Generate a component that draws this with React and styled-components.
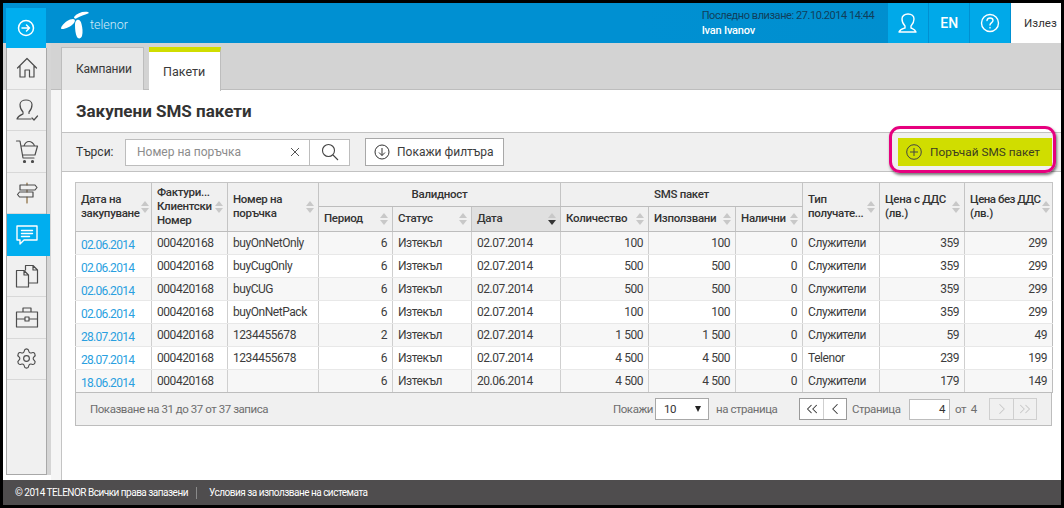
import React from 'react'
import styled, { createGlobalStyle } from 'styled-components'
import { ChevronLeft, ChevronRight, ChevronsLeft, ChevronsRight, Settings } from 'lucide-react'

const GlobalStyle = createGlobalStyle`
  html, body { margin: 0; padding: 0; background: #000; }
  body { font-family: Roboto, "Noto Sans", "Liberation Sans", sans-serif; font-size: 12px; color: #3c3c3c; }
  * { box-sizing: border-box; }
`

const rows = [
  ['02.06.2014', 'buyOnNetOnly', '6', '02.07.2014', '100', '100', 'Служители', '359', '299'],
  ['02.06.2014', 'buyCugOnly', '6', '02.07.2014', '500', '500', 'Служители', '359', '299'],
  ['02.06.2014', 'buyCUG', '6', '02.07.2014', '500', '500', 'Служители', '359', '299'],
  ['02.06.2014', 'buyOnNetPack', '6', '02.07.2014', '100', '100', 'Служители', '359', '299'],
  ['28.07.2014', '1234455678', '2', '02.07.2014', '1 500', '1 500', 'Служители', '59', '49'],
  ['28.07.2014', '1234455678', '6', '02.07.2014', '4 500', '4 500', 'Telenor', '239', '199'],
  ['18.06.2014', '', '6', '20.06.2014', '4 500', '4 500', 'Служители', '179', '149'],
]

const colWidths = [76, 76, 91, 74, 79, 89, 88, 87, 67, 77, 85, 88]

const Icon = ({ children }) => (
  <svg width="24" height="24" viewBox="0 0 24 24" fill="none" stroke="#4d4d4d" strokeWidth="1.2" strokeLinejoin="round" strokeLinecap="round">
    {children}
  </svg>
)

const navItems = [
  { id: 'home', icon: <Icon><path d="M2.5 12 12 2.5 21.5 12M5 10v11h5v-7h4.500v7H19V10" /></Icon> },
  { id: 'user', icon: <Icon><path d="M8 14c-2-2-3-5-3-7.500C5 3.500 8 2 11 2s6 1.500 6 4.500c0 2.500-1 5.500-3 7.500v1.500M8 14v2c-2 1-5 2-6 5h14M17 20l2 2 3.500-4" /></Icon> },
  { id: 'cart', icon: <Icon><path d="M1.500 2H5l3 17h11M6 7h16.500L20 16H7.500M9 7c1-3 3-4.500 5-4.500s5 2 5.500 4.500" /><circle cx="9.500" cy="22.500" r="1" fill="#4d4d4d" /><circle cx="17.500" cy="22.500" r="1" fill="#4d4d4d" /></Icon> },
  { id: 'sign', icon: <Icon><path d="M12 2v2M12 9v2M12 16v6" stroke="#8a6a3a" /><path d="M5 4h15l2 2.500L20 9H5zM18 11H4.500L2.500 13.500l2 2.500H18z" /></Icon> },
  { id: 'sms', active: true, icon: <Icon><path d="M2 3h20v14H9l-4 4v-4H2zM6.500 7.500h11M6.500 10.500h11M6.500 13.500h8" stroke="#fff" strokeWidth="1.400" /></Icon> },
  { id: 'docs', icon: <Icon><path d="M1.500 6.500H9l4.500 4.500v12h-12zM9 6.500V11h4.500M10.500 6V1.500H18l4.500 4.500v13h-9M18 1.500V6h4.500" /></Icon> },
  { id: 'case', icon: <Icon><path d="M1.500 7h21v15h-21zM8 7V3h8v4M1.500 14h8M14.500 14h8M10 12h4v4h-4z" /></Icon> },
  { id: 'gear', icon: <Settings size={23} strokeWidth={1.2} color="#4d4d4d" /> },
]

function SortHead({ children, active }) {
  return (
    <HeadInner>
      <span>{children}</span>
      <Sort $active={active}><i /><i /></Sort>
    </HeadInner>
  )
}

function App() {
  return (
    <Frame lang="bg">
      <GlobalStyle />
      <TopBar>
        <Logo>
          <svg width="28" height="28" viewBox="0 0 28 28" fill="#fff">
            <path d="M27 1C22 0 16 2 13 6c0 2 2 2 3 1 3-2 8-3 11-4.500 1-.5 1-1 0-1.500z" />
            <path d="M1 18c-1.500.5-1-2 0-3 3-4 7-7 11-7 2 0 2.500 2 1 4-3 3.500-8 6-12 6z" />
            <path d="M16 9c2-1 4 1 4.500 4 1 4 1.500 8 .5 12-1 3-4 3-5 1-1.500-3-2-8-2-12 0-2.500.5-4 2-5z" />
          </svg>
          <LogoText>telenor</LogoText>
        </Logo>
        <LastLogin>
          <span>Последно влизане: 27.10.2014 14:44</span>
          <strong>Ivan Ivanov</strong>
        </LastLogin>
        <TopButton aria-label="Профил">
          <svg width="22" height="22" viewBox="0 0 22 22" fill="none" stroke="#fff" strokeWidth="1.400" strokeLinejoin="round">
            <path d="M8 14c-2-2-3-4.500-3-7 0-3 2.500-5 6-5s6 2 6 5c0 2.500-1 5-3 7v2c2 1 4 1.500 5 4H2c1-2.500 3-3 6-4z" />
          </svg>
        </TopButton>
        <TopButton>EN</TopButton>
        <TopButton aria-label="Помощ">
          <svg width="22" height="22" viewBox="0 0 22 22" fill="none" stroke="#fff" strokeWidth="1.400" strokeLinecap="round">
            <circle cx="11" cy="11" r="8.500" />
            <path d="M8 8.500c.2-1.700 1.400-2.500 3-2.500s3 1 3 2.500c0 2-3 2.200-3 4.500" />
            <path d="M11 15.500v.4" />
          </svg>
        </TopButton>
        <Logout>Излез</Logout>
      </TopBar>
      <Main>
        <RailColumn>
          <Toggle aria-label="Меню">
            <svg width="20" height="20" viewBox="0 0 20 20" fill="none" stroke="#fff" strokeWidth="1.500" strokeLinecap="round" strokeLinejoin="round">
              <circle cx="10" cy="10" r="7.500" />
              <path d="M6 10h7.500M10.500 7l3 3-3 3" />
            </svg>
          </Toggle>
          <Rail>
            {navItems.map((item) => (
              <NavItem key={item.id} $active={item.active}>{item.icon}</NavItem>
            ))}
          </Rail>
        </RailColumn>
        <Pane>
          <TabBand>
            <Tab>Кампании</Tab>
            <ActiveTab>Пакети</ActiveTab>
          </TabBand>
          <Panel>
            <Title>Закупени SMS пакети</Title>
            <Toolbar>
              <SearchLabel>Търси:</SearchLabel>
              <SearchBox>
                <SearchText>Номер на поръчка</SearchText>
                <svg width="10" height="10" viewBox="0 0 10 10" stroke="#555" strokeWidth="1"><path d="M1 1l8 8M9 1l-8 8" /></svg>
              </SearchBox>
              <SearchButton aria-label="Търси">
                <svg width="18" height="18" viewBox="0 0 18 18" fill="none" stroke="#444" strokeWidth="1.100"><circle cx="7.500" cy="7.500" r="6" /><path d="M12 12l5 5" /></svg>
              </SearchButton>
              <FilterButton>
                <svg width="16" height="16" viewBox="0 0 16 16" fill="none" stroke="#333" strokeWidth="1"><circle cx="8" cy="8" r="7" /><path d="M8 4v7.500M5 8.500l3 3 3-3" /></svg>
                Покажи филтъра
              </FilterButton>
              <OrderWrap>
                <OrderButton>
                  <svg width="16" height="16" viewBox="0 0 16 16" fill="none" stroke="#444" strokeWidth="1"><circle cx="8" cy="8" r="7.300" /><path d="M8 4v8M4 8h8" /></svg>
                  Поръчай SMS пакет
                </OrderButton>
                <Highlight />
              </OrderWrap>
            </Toolbar>
            <Grid>
              <Table>
                <colgroup>
                  {colWidths.map((w, i) => <col key={i} width={w} />)}
                </colgroup>
                <thead>
                  <tr>
                    <Th rowSpan={2}><SortHead>Дата на закупуване</SortHead></Th>
                    <Th rowSpan={2}><SortHead>Фактури... Клиентски Номер</SortHead></Th>
                    <Th rowSpan={2}><SortHead>Номер на поръчка</SortHead></Th>
                    <GroupTh colSpan={3}>Валидност</GroupTh>
                    <GroupTh colSpan={3}>SMS пакет</GroupTh>
                    <Th rowSpan={2}><SortHead>Тип получате...</SortHead></Th>
                    <Th rowSpan={2}><SortHead>Цена с ДДС (лв.)</SortHead></Th>
                    <Th rowSpan={2}><SortHead><TightLine>Цена без ДДС</TightLine>(лв.)</SortHead></Th>
                  </tr>
                  <tr>
                    <SubTh><SortHead>Период</SortHead></SubTh>
                    <SubTh><SortHead>Статус</SortHead></SubTh>
                    <SubTh $active><SortHead active>Дата</SortHead></SubTh>
                    <SubTh><SortHead>Количество</SortHead></SubTh>
                    <SubTh><SortHead>Използвани</SortHead></SubTh>
                    <SubTh><SortHead>Налични</SortHead></SubTh>
                  </tr>
                </thead>
                <tbody>
                  {rows.map((r, i) => (
                    <Row key={i}>
                      <Td><DateLink>{r[0]}</DateLink></Td>
                      <Td>000420168</Td>
                      <Td>{r[1]}</Td>
                      <Td $right>{r[2]}</Td>
                      <Td>Изтекъл</Td>
                      <Td>{r[3]}</Td>
                      <Td $right>{r[4]}</Td>
                      <Td $right>{r[5]}</Td>
                      <Td $right>0</Td>
                      <Td>{r[6]}</Td>
                      <Td $right>{r[7]}</Td>
                      <Td $right>{r[8]}</Td>
                    </Row>
                  ))}
                </tbody>
              </Table>
              <Pager>
                <PagerInfo>Показване на 31 до 37 от 37 записа</PagerInfo>
                <PagerLabel $width={39}>Покажи</PagerLabel>
                <PageSize>10<Caret /></PageSize>
                <PagerLabel $width={66} $left={7} $right={17}>на страница</PagerLabel>
                <PageGroup>
                  <PageButton aria-label="Първа"><ChevronsLeft size={18} strokeWidth={1.4} /></PageButton>
                  <PageButton aria-label="Предишна"><ChevronLeft size={18} strokeWidth={1.4} /></PageButton>
                </PageGroup>
                <PagerLabel $width={52} $left={5}>Страница</PagerLabel>
                <PageInput>4</PageInput>
                <PagerLabel $width={26} $left={5} $right={8}>от&nbsp; 4</PagerLabel>
                <PageGroup $disabled>
                  <PageButton $disabled aria-label="Следваща"><ChevronRight size={18} strokeWidth={1.4} /></PageButton>
                  <PageButton $disabled aria-label="Последна"><ChevronsRight size={18} strokeWidth={1.4} /></PageButton>
                </PageGroup>
              </Pager>
            </Grid>
          </Panel>
        </Pane>
      </Main>
      <Footer>
        <FooterCopy>© 2014 TELENOR Всички права запазени</FooterCopy>
        <FooterSep />
        <span>Условия за използване на системата</span>
      </Footer>
    </Frame>
  )
}

const Frame = styled.div`
  width: 1058px;
  height: 502px;
  margin: 3px 0 0 3px;
  display: flex;
  flex-direction: column;
  background: #fff;
  overflow: hidden;
`

const TopBar = styled.header`
  height: 40px;
  flex: none;
  display: flex;
  align-items: stretch;
  background: linear-gradient(to right, #0090d2, #0090d2 60%, #008ecd);
`

const Logo = styled.div`
  width: 699px;
  padding: 8px 0 0 58px;
  display: flex;
  align-items: flex-start;
`

const LogoText = styled.span`
  margin: 6px 0 0 1px;
  font-size: 12.500px;
  font-weight: 300;
  color: #d5edf9;
`

const LastLogin = styled.div`
  width: 188px;
  padding: 5px 0 0 1px;
  display: flex;
  flex-direction: column;
  font-size: 11px;
  letter-spacing: -0.44px;
  line-height: 15px;
  white-space: nowrap;
  color: #103f5c;
  strong { color: #fff; font-weight: 500; letter-spacing: -0.2px; }
`

const TopButton = styled.div`
  width: 41px;
  display: flex;
  align-items: center;
  justify-content: center;
  background: #00a9e9;
  border-right: 1px solid #0090d2;
  color: #fff;
  font-size: 14px;
  font-weight: 500;
`

const Logout = styled.div`
  width: 50px;
  display: flex;
  align-items: center;
  padding-left: 13px;
  background: #fff;
  color: #333;
  font-size: 11.500px;
`

const Main = styled.div`
  flex: 1;
  display: flex;
  min-height: 0;
  background: linear-gradient(#d3d3d3 47px, #fff 47px);
`

const RailColumn = styled.div`
  width: 48px;
  height: 432px;
  flex: none;
  padding-left: 3px;
  background: linear-gradient(to right, transparent 43px, #d5d5d5 43px);
`

const Toggle = styled.div`
  width: 40px;
  height: 40px;
  margin-top: -35px;
  position: relative;
  display: flex;
  align-items: center;
  justify-content: center;
  background: #00aeef;
`

const Rail = styled.nav`
  width: 41px;
  height: 427px;
  border: 1px solid #a8a8a8;
  border-top: 0;
  background: #f0f0f0;
`

const NavItem = styled.div`
  height: 41.5px;
  display: flex;
  align-items: center;
  justify-content: center;
  border-bottom: 1px solid #d8d8d8;
  position: relative;
  ${(p) => p.$active && 'background:#00aeef; width:43px; border-bottom:0; padding-right:3px;'}
`

const Pane = styled.div`
  flex: 1;
  min-width: 0;
  display: flex;
  flex-direction: column;
`

const TabBand = styled.div`
  height: 47px;
  flex: none;
  padding: 4px 0 0 10px;
  display: flex;
  gap: 5px;
  background: #d3d3d3;
  border-bottom: 1px solid #bdbdbd;
`

const Tab = styled.div`
  width: 83px;
  height: 43px;
  padding-left: 14px;
  display: flex;
  align-items: center;
  border: 1px solid #bdbdbd;
  border-bottom: 0;
  background: #e8e8e8;
  font-size: 12px;
  letter-spacing: -0.2px;
  color: #3a3a3a;
`

const ActiveTab = styled.div`
  width: 72px;
  height: 44px;
  padding-left: 14px;
  display: flex;
  align-items: center;
  border-top: 5px solid #d0dd00;
  border-right: 1px solid #bdbdbd;
  background: #fff;
  font-size: 12.500px;
  color: #3a3a3a;
`

const Panel = styled.main`
  flex: 1;
  min-height: 0;
  margin-left: 10px;
  border-left: 1px solid #c4c4c4;
  box-shadow: -10px 0 0 #f5f5f5;
`

const Title = styled.h1`
  margin: 0;
  height: 42px;
  padding-left: 14px;
  display: flex;
  align-items: center;
  font-size: 17px;
  font-weight: 700;
  color: #333;
`

const Toolbar = styled.div`
  height: 40px;
  display: flex;
  align-items: center;
  padding-left: 14px;
  background: #f0f0f0;
  border-top: 1px solid #c2c2c2;
  border-bottom: 1px solid #c2c2c2;
`

const SearchLabel = styled.span`
  width: 49px;
  color: #333;
`

const SearchBox = styled.div`
  width: 185px;
  height: 27px;
  display: flex;
  align-items: center;
  justify-content: space-between;
  padding: 0 9px 0 11px;
  background: #fff;
  border: 1px solid #bdbdbd;
`

const SearchText = styled.span`
  color: #8c8c8c;
`

const SearchButton = styled.div`
  width: 40px;
  height: 27px;
  display: flex;
  align-items: center;
  justify-content: center;
  background: #fff;
  border: 1px solid #bdbdbd;
  border-left: 0;
`

const FilterButton = styled.div`
  width: 139px;
  height: 28px;
  margin-left: 15px;
  padding-left: 8px;
  display: flex;
  align-items: center;
  gap: 7px;
  background: #fff;
  border: 1px solid #a8a8a8;
  font-size: 12px;
`

const OrderWrap = styled.div`
  position: relative;
  margin: 0 9px 0 auto;
`

const OrderButton = styled.div`
  width: 154px;
  height: 28px;
  padding-left: 8px;
  display: flex;
  align-items: center;
  gap: 8px;
  background: #d0dd00;
  color: #3c3c20;
  font-size: 11.800px;
`

const Highlight = styled.div`
  position: absolute;
  inset: -12px -4px -7px -9px;
  border: 3px solid #e6007e;
  border-radius: 11px;
  box-shadow: 1px 2px 3px rgba(0, 0, 0, 0.55);
  pointer-events: none;
`

const Grid = styled.div`
  width: 977px;
  margin: 10px 0 0 13px;
`

const Table = styled.table`
  width: 977px;
  table-layout: fixed;
  border-collapse: collapse;
`

const Th = styled.th`
  padding: 0 4px 2px 5px;
  background: #f0f0f0;
  border: 1px solid #c4c4c4;
  border-bottom-color: #bdbdbd;
  font-size: 11.500px;
  letter-spacing: -0.3px;
  line-height: 14px;
  font-weight: 500;
  text-align: left;
  color: #333;
`

const GroupTh = styled(Th)`
  height: 24px;
  text-align: center;
  padding: 0 0 2px;
`

const SubTh = styled(Th)`
  height: 25px;
  ${(p) => p.$active && 'background:#e0e0e0;'}
`

const HeadInner = styled.div`
  display: flex;
  align-items: center;
  justify-content: space-between;
  gap: 1px;
`

const TightLine = styled.span`
  display: block;
  white-space: nowrap;
  letter-spacing: -0.5px;
`

const Sort = styled.span`
  flex: none;
  display: flex;
  flex-direction: column;
  gap: 2px;
  margin-top: 2px;
  i {
    display: block;
    width: 0;
    height: 0;
    border-left: 4px solid transparent;
    border-right: 4px solid transparent;
  }
  i:first-child { border-bottom: 5px solid #c8c8c8; }
  i:last-child { border-top: 5px solid ${(p) => (p.$active ? '#333' : '#c8c8c8')}; }
`

const Row = styled.tr`
  height: 23px;
  background: #fff;
  &:nth-child(odd) { background: #f7f7f7; }
`

const Td = styled.td`
  padding: 0 5px 1px;
  border-left: 1px solid #cfcfcf;
  border-right: 1px solid #cfcfcf;
  border-bottom: 1px solid #e8e8e8;
  font-size: 12px;
  letter-spacing: -0.45px;
  white-space: nowrap;
  color: #3c3c3c;
  text-align: ${(p) => (p.$right ? 'right' : 'left')};
  tr:last-child > & { border-bottom-color: #bdbdbd; }
  &:first-child { border-left-color: #bdbdbd; }
  &:last-child { border-right-color: #bdbdbd; }
`

const DateLink = styled.a`
  position: relative;
  top: 2px;
  letter-spacing: -0.7px;
  color: #2a9fe0;
`

const Pager = styled.div`
  height: 33px;
  display: flex;
  align-items: center;
  padding: 0 14px;
  background: #f0f0f0;
  border: 1px solid #bdbdbd;
  border-top: 0;
  color: #6e6e6e;
  font-size: 11.500px;
  letter-spacing: -0.45px;
`

const PagerInfo = styled.span`
  margin-right: auto;
`

const PagerLabel = styled.span`
  flex: none;
  width: ${(p) => p.$width}px;
  margin-left: ${(p) => p.$left || 0}px;
  margin-right: ${(p) => p.$right || 0}px;
  white-space: nowrap;
`

const PageSize = styled.div`
  width: 54px;
  height: 22px;
  margin-left: 3px;
  padding: 0 7px 0 8px;
  display: flex;
  align-items: center;
  justify-content: space-between;
  background: #fff;
  border: 1px solid #a8a8a8;
  color: #333;
`

const Caret = styled.i`
  width: 0;
  height: 0;
  border-left: 3.500px solid transparent;
  border-right: 3.500px solid transparent;
  border-top: 6px solid #222;
`

const PageGroup = styled.div`
  display: flex;
  border: 1px solid ${(p) => (p.$disabled ? '#cfcfcf' : '#9a9a9a')};
`

const PageButton = styled.div`
  width: 23px;
  height: 20px;
  display: flex;
  align-items: center;
  justify-content: center;
  background: ${(p) => (p.$disabled ? 'transparent' : '#fff')};
  color: ${(p) => (p.$disabled ? '#c8c8c8' : '#333')};
  & + & { border-left: 1px solid ${(p) => (p.$disabled ? '#cfcfcf' : '#9a9a9a')}; }
`

const PageInput = styled.div`
  width: 41px;
  height: 21px;
  margin-left: 5px;
  padding-right: 4px;
  display: flex;
  align-items: center;
  justify-content: flex-end;
  background: #fff;
  border: 1px solid #bdbdbd;
  color: #333;
`

const Footer = styled.footer`
  height: 25px;
  flex: none;
  display: flex;
  align-items: center;
  padding-left: 12px;
  background: #4f4d4e;
  color: #fff;
  font-size: 10px;
  letter-spacing: -0.5px;
  white-space: nowrap;
`

const FooterCopy = styled.span`
  width: 168px;
`

const FooterSep = styled.i`
  width: 1px;
  height: 12px;
  margin: 0 12px 0 13px;
  background: #8a8a8a;
`

export default App
